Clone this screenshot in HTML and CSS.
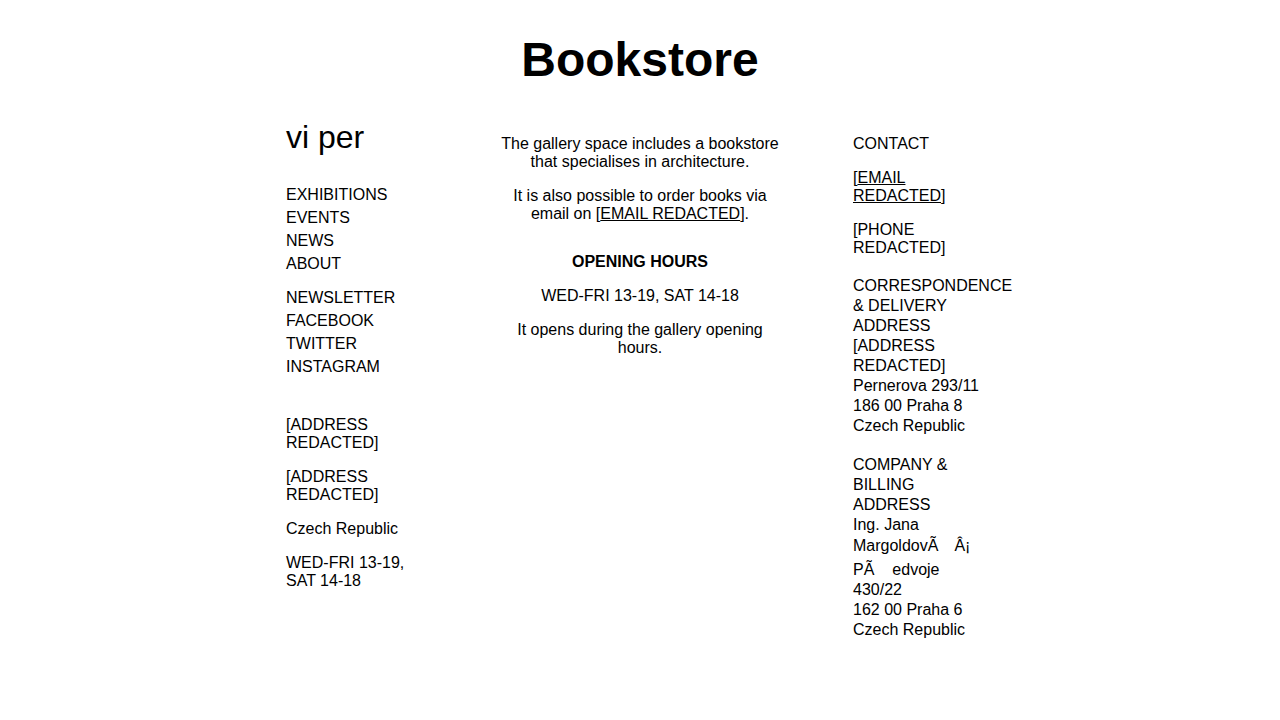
FILE: index.html
```html
<!DOCTYPE html>
<html lang="en">
<head>
<meta charset="utf-8">
<title>Bookstore</title>
<link rel="stylesheet" href="styles.css">
</head>
<body>
<h1 class="title">Bookstore</h1>
<div class="columns">
  <aside class="col col-left">
    <div class="logo">vi per</div>
    <ul class="nav nav-main">
      <li><a href="#">EXHIBITIONS</a></li>
      <li><a href="#">EVENTS</a></li>
      <li><a href="#">NEWS</a></li>
      <li><a href="#">ABOUT</a></li>
    </ul>
    <ul class="nav nav-social">
      <li><a href="#">NEWSLETTER</a></li>
      <li><a href="#">FACEBOOK</a></li>
      <li><a href="#">TWITTER</a></li>
      <li><a href="#">INSTAGRAM</a></li>
    </ul>
    <div class="info">
      <p>[ADDRESS REDACTED]</p>
      <p>[ADDRESS REDACTED]</p>
      <p>Czech Republic</p>
      <p>WED-FRI 13-19, SAT 14-18</p>
    </div>
  </aside>
  <main class="col col-mid">
    <p>The gallery space includes a bookstore that specialises in architecture.</p>
    <p>It is also possible to order books via email on [<a class="ul" href="#">EMAIL REDACTED</a>].</p>
    <p class="hours-title">OPENING HOURS</p>
    <p>WED-FRI 13-19, SAT 14-18</p>
    <p>It opens during the gallery opening hours.</p>
  </main>
  <aside class="col col-right">
    <p>CONTACT</p>
    <p>[<a class="ul" href="#">EMAIL REDACTED</a>]</p>
    <p>[PHONE REDACTED]</p>
    <p class="addr addr-first">CORRESPONDENCE &amp; DELIVERY ADDRESS<br>[ADDRESS REDACTED]<br>Pernerova 293/11<br>186 00 Praha 8<br>Czech Republic</p>
    <p class="addr addr-second">COMPANY &amp; BILLING ADDRESS<br>Ing. Jana MargoldovÃ<span class="cc cc-a"></span>Â¡<br>PÃ<span class="cc cc-b"></span>edvoje<br>430/22<br>162 00 Praha 6<br>Czech Republic</p>
  </aside>
</div>
</body>
</html>
```
FILE: styles.css
```css
html, body {
  margin: 0;
  padding: 0;
  background: #ffffff;
  color: #000000;
}
body {
  font-family: "Liberation Sans", Arial, sans-serif;
  font-size: 16px;
}
a {
  color: #000000;
  text-decoration: none;
}
a.ul {
  text-decoration: underline;
}
.title {
  margin: 32px 0 32px;
  text-align: center;
  font-size: 48px;
  font-weight: bold;
  line-height: normal;
}
.columns {
  display: flex;
  justify-content: center;
  align-items: flex-start;
}
.col p {
  margin: 16px 0;
}
.col-left {
  width: 135px;
}
.col-mid {
  width: 286px;
  margin-left: 76px;
  text-align: center;
}
.col-right {
  width: 141px;
  margin-left: 70px;
}
.logo {
  font-size: 32px;
  line-height: normal;
}
.nav {
  list-style: none;
  margin: 0;
  padding: 0;
}
.nav li {
  line-height: 23px;
}
.nav-main {
  margin-top: 27px;
}
.nav-social {
  margin-top: 11px;
}
.info {
  margin-top: 38px;
}
.col-mid .hours-title {
  font-weight: bold;
  margin-top: 30px;
}
.col-right .addr {
  line-height: 20px;
}
.col-right .addr-first {
  margin-top: 19px;
}
.col-right .addr-second {
  margin-top: 19px;
}
.cc {
  display: inline-block;
  vertical-align: baseline;
}
.cc-a {
  width: 16px;
  height: 16px;
}
.cc-b {
  width: 18px;
  height: 19px;
}
```
